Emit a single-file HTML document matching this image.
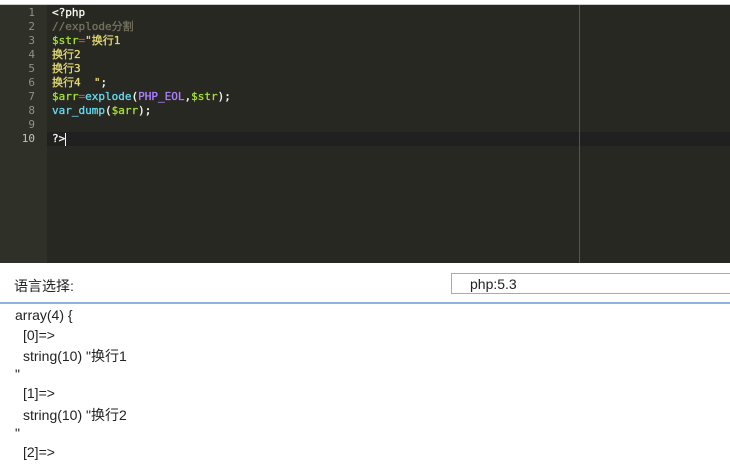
<!DOCTYPE html>
<html><head><meta charset="utf-8"><style>
html,body{margin:0;padding:0;width:730px;height:466px;overflow:hidden;background:#fff;}
#ed{position:absolute;left:0;top:4px;width:730px;height:259px;background:#272822;border-top:1px solid #ccc;box-sizing:border-box;}
#gut{position:absolute;left:0;top:0;width:47px;height:100%;background:#2f3129;}
.ln{position:absolute;left:0;width:35px;text-align:right;color:#8f908a;font:11px/14px "DejaVu Sans Mono",monospace;height:14px;}
.cl{position:absolute;left:52px;white-space:pre;font:11px/14px "DejaVu Sans Mono","Noto Sans CJK SC",monospace;color:#e6db74;height:14px;overflow:visible;-webkit-text-stroke:0.3px currentColor;}
#act{position:absolute;left:0;top:127px;width:730px;height:14px;background:#202020;}
#mar{position:absolute;left:579px;top:0;width:1px;height:100%;background:#555;}
.k{color:#a6e22e}.p{color:#f92672}.c{color:#75715e}.b{color:#66d9ef}.v{color:#ae81ff}.w{color:#f8f8f2}
.t{position:absolute;font:14px "Liberation Sans","Noto Sans CJK SC",sans-serif;color:#222;white-space:pre;}
</style></head><body>
<div id="ed">
<div id="act"></div>
<div id="gut"></div>
<div id="mar"></div>
<div class="ln" style="top:1px">1</div>
<div class="ln" style="top:15px">2</div>
<div class="ln" style="top:29px">3</div>
<div class="ln" style="top:43px">4</div>
<div class="ln" style="top:57px">5</div>
<div class="ln" style="top:71px">6</div>
<div class="ln" style="top:85px">7</div>
<div class="ln" style="top:99px">8</div>
<div class="ln" style="top:113px">9</div>
<div class="ln" style="top:127px;color:#c2c2bf">10</div>
<div class="cl w" style="top:1px">&lt;?php</div>
<div class="cl c" style="top:15px">//explode分割</div>
<div class="cl" style="top:29px"><span class="k">$str</span><span class="p">=</span>"换行1</div>
<div class="cl" style="top:43px">换行2</div>
<div class="cl" style="top:57px">换行3</div>
<div class="cl" style="top:71px">换行4  "<span class="w">;</span></div>
<div class="cl" style="top:85px"><span class="k">$arr</span><span class="p">=</span><span class="b">explode</span><span class="w">(</span><span class="v">PHP_EOL</span><span class="w">,</span><span class="k">$str</span><span class="w">);</span></div>
<div class="cl" style="top:99px"><span class="b">var_dump</span><span class="w">(</span><span class="k">$arr</span><span class="w">);</span></div>
<div class="cl w" style="top:127px">?&gt;<span style="display:inline-block;width:1px;height:13px;background:#f8f8f0;vertical-align:middle"></span></div>
</div>
<div class="t" style="left:14px;top:276px">语言选择:</div>
<div style="position:absolute;left:451px;top:273px;width:285px;height:21px;border:1px solid #aaa;box-sizing:border-box;"></div>
<div class="t" style="left:470px;top:276px">php:5.3</div>
<div style="position:absolute;left:0;top:302px;width:730px;height:2px;background:#8fb2e3;"></div>
<div class="t" style="left:15px;top:307px">array(4) {</div>
<div class="t" style="left:23px;top:327px">[0]=&gt;</div>
<div class="t" style="left:23px;top:346px">string(10) "换行1</div>
<div class="t" style="left:15px;top:366px">"</div>
<div class="t" style="left:23px;top:385px">[1]=&gt;</div>
<div class="t" style="left:23px;top:405px">string(10) "换行2</div>
<div class="t" style="left:15px;top:425px">"</div>
<div class="t" style="left:23px;top:444px">[2]=&gt;</div>
</body></html>
